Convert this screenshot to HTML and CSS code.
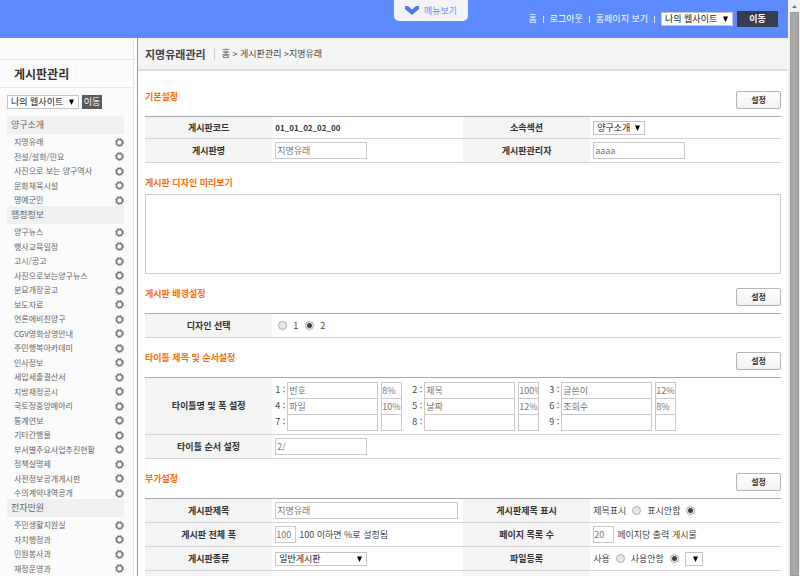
FILE: index.html
```html
<!DOCTYPE html>
<html lang="ko">
  <head>
    <meta charset="UTF-8" />
    <meta name="viewport" content="width=device-width, initial-scale=1.0" />
    <title>게시판관리</title>
    <link rel="stylesheet" href="styles.css">
  </head>
  <body>
    <!-- 톱니바퀴 아이콘 -->
    <svg class="defs" width="0" height="0" aria-hidden="true">
      <symbol id="gear" viewBox="0 0 18 18">
        <circle cx="9" cy="9" r="6" fill="none" stroke="#777" stroke-width="2.8" />
        <circle cx="9" cy="9" r="7.9" fill="none" stroke="#777" stroke-width="2" stroke-dasharray="3.1 3.1" />
      </symbol>
    </svg>

    <div class="page">
      <header class="header">
        <button type="button" class="menu-tab">
          <svg width="14" height="9" viewBox="0 0 14 9" aria-hidden="true">
            <path d="M0 0 L3 0 L7 3.5 L11 0 L14 0 L14 3 L7 9 L0 3 Z" fill="#4a7cf0" />
          </svg>
          메뉴보기
        </button>
        <nav class="top-nav">
          <a href="#">홈</a><i></i>
          <a href="#">로그아웃</a><i></i>
          <a href="#">홈페이지 보기</a><i></i>
          <select class="site-select" aria-label="사이트 선택"><option>나의 웹사이트</option></select>
          <button type="button" class="go-btn">이동</button>
        </nav>
      </header>

      <div class="body">
        <aside class="sidebar">
          <div class="side-space"></div>
          <h2 class="side-title">게시판관리</h2>
          <div class="side-go">
            <select class="site-select" aria-label="사이트 선택"><option>나의 웹사이트</option></select>
            <button type="button">이동</button>
          </div>
          <div class="side-menu" id="sideMenu"></div>
        </aside>

        <main class="main">
          <div class="main-head">
            <h1>지명유래관리</h1>
            <p class="path">홈 &gt; 게시판관리 &gt;지명유래</p>
          </div>

          <form class="content">
            <!-- 기본설정 -->
            <section>
              <div class="section-head">
                <h3>기본설정</h3>
                <button type="button" class="set-btn">설정</button>
              </div>
              <table class="form-table">
                <colgroup><col class="col-th" /><col class="col-td" /><col class="col-th" /><col class="col-td" /></colgroup>
                <tr class="short">
                  <th>게시판코드</th>
                  <td><b class="code">01_01_02_02_00</b></td>
                  <th><label for="section">소속섹션</label></th>
                  <td><select id="section" class="w52"><option>양구소개</option></select></td>
                </tr>
                <tr>
                  <th><label for="boardName">게시판명</label></th>
                  <td><input type="text" id="boardName" class="mid" value="지명유래" /></td>
                  <th><label for="manager">게시판관리자</label></th>
                  <td><input type="text" id="manager" class="mid" value="aaaa" /></td>
                </tr>
              </table>
            </section>

            <!-- 디자인 미리보기 -->
            <section>
              <div class="section-head plain">
                <h3>게시판 디자인 미리보기</h3>
              </div>
              <div class="preview"></div>
            </section>

            <!-- 배경설정 -->
            <section>
              <div class="section-head">
                <h3>게시판 배경설정</h3>
                <button type="button" class="set-btn">설정</button>
              </div>
              <table class="form-table">
                <colgroup><col class="col-th" /><col /></colgroup>
                <tr>
                  <th>디자인 선택</th>
                  <td>
                    <div class="line design">
                      <label><input type="radio" name="design" /> 1</label>
                      <label><input type="radio" name="design" checked /> 2</label>
                    </div>
                  </td>
                </tr>
              </table>
            </section>

            <!-- 타이틀 설정 -->
            <section>
              <div class="section-head">
                <h3>타이틀 제목 및 순서설정</h3>
                <button type="button" class="set-btn">설정</button>
              </div>
              <table class="form-table">
                <colgroup><col class="col-th" /><col /></colgroup>
                <tr class="tall">
                  <th>타이틀명 및 폭 설정</th>
                  <td><div class="titles" id="titles"></div></td>
                </tr>
                <tr>
                  <th><label for="order">타이틀 순서 설정</label></th>
                  <td><input type="text" id="order" class="mid" value="2/" /></td>
                </tr>
              </table>
            </section>

            <!-- 부가설정 -->
            <section>
              <div class="section-head">
                <h3>부가설정</h3>
                <button type="button" class="set-btn">설정</button>
              </div>
              <table class="form-table">
                <colgroup><col class="col-th" /><col class="col-td" /><col class="col-th" /><col class="col-td" /></colgroup>
                <tr>
                  <th><label for="boardTitle">게시판제목</label></th>
                  <td><input type="text" id="boardTitle" class="wide" value="지명유래" /></td>
                  <th>게시판제목 표시</th>
                  <td>
                    <div class="line">
                      <label>제목표시 <input type="radio" name="showTitle" /></label>
                      <label>표시안함 <input type="radio" name="showTitle" checked /></label>
                    </div>
                  </td>
                </tr>
                <tr>
                  <th><label for="boardWidth">게시판 전체 폭</label></th>
                  <td>
                    <div class="line tight"><input type="text" id="boardWidth" class="small" value="100" /> 100 이하면 %로 설정됨</div>
                  </td>
                  <th><label for="listCount">페이지 목록 수</label></th>
                  <td>
                    <div class="line tight"><input type="text" id="listCount" class="small" value="20" /> 페이지당 출력 게시물</div>
                  </td>
                </tr>
                <tr>
                  <th><label for="boardType">게시판종류</label></th>
                  <td><select id="boardType" class="mid"><option>일반게시판</option></select></td>
                  <th>파일등록</th>
                  <td>
                    <div class="line">
                      <label>사용 <input type="radio" name="file" /></label>
                      <label>사용안함 <input type="radio" name="file" checked /></label>
                      <select class="w18" aria-label="파일 수"><option></option></select>
                    </div>
                  </td>
                </tr>
                <tr>
                  <th></th>
                  <td></td>
                  <th></th>
                  <td></td>
                </tr>
              </table>
            </section>
          </form>
        </main>
      </div>
    </div>

    <div class="scrollbar" aria-hidden="true">
      <svg width="9" height="12" viewBox="0 0 9 12"><path d="M2 8 L4.5 5 L7 8 Z" fill="#777" /></svg>
      <div class="thumb"></div>
    </div>

    <script>
      // 왼쪽 메뉴
      const menus = [
        ["양구소개", ["지명유래", "전설/설화/민요", "사진으로 보는 양구역사", "문화체육시설", "명예군민"]],
        ["행정정보", [
          "양구뉴스", "행사교육일정", "고시/공고", "사진으로보는양구뉴스", "분묘개장공고",
          "보도자료", "언론에비친양구", "CGV영화상영안내", "주민행복아카데미", "인사정보",
          "세입세출결산서", "지방재정공시", "국토정중앙메아리", "통계연보", "기타간행물",
          "부서별주요사업추진현황", "정책실명제", "사전정보공개게시판", "수의계약내역공개",
        ]],
        ["전자민원", ["주민생활지원실", "자치행정과", "민원봉사과", "재정운영과"]],
      ];

      document.getElementById("sideMenu").innerHTML = menus
        .map(([title, items]) => `
          <h3>${title}</h3>
          <ul>${items
            .map((name) => `<li><a href="#">${name}</a><a href="#" aria-label="${name} 설정"><svg width="9" height="9"><use href="#gear" /></svg></a></li>`)
            .join("")}</ul>`)
        .join("");

      // 타이틀명과 폭
      const titles = [
        ["번호", "8%"], ["제목", "100%"], ["글쓴이", "12%"],
        ["파일", "10%"], ["날짜", "12%"], ["조회수", "8%"],
        ["", ""], ["", ""], ["", ""],
      ];

      document.getElementById("titles").innerHTML = titles
        .map(([name, width], i) => `
          <div class="title-item">
            <label for="title${i + 1}">${i + 1} :</label>
            <input type="text" id="title${i + 1}" class="name" value="${name}" />
            <input type="text" class="small" aria-label="${i + 1} 폭" value="${width}" />
          </div>`)
        .join("");
    </script>
  </body>
</html>
```
FILE: styles.css
```css
* {
  box-sizing: border-box;
  margin: 0;
  padding: 0;
}

body {
  display: flex;
  height: 100vh;
  overflow: hidden;
  font-family: "Noto Sans CJK KR", sans-serif;
  font-size: 9px;
  line-height: 12px;
  color: #444;
  background-color: #fff;
}

a {
  color: inherit;
  text-decoration: none;
}

ul {
  list-style: none;
}

input,
select,
button {
  font-family: inherit;
  font-size: 9px;
  line-height: 12px;
}

button {
  border: none;
  cursor: pointer;
}

.defs {
  position: absolute;
}

.page {
  flex: 1;
  min-width: 0;
  display: flex;
  flex-direction: column;
}

/* 상단 */
.header {
  flex: none;
  display: flex;
  align-items: flex-start;
  height: 38px;
  background-color: #5c8bff;
}

.menu-tab {
  display: flex;
  align-items: center;
  gap: 5px;
  height: 21px;
  margin-left: 50%;
  padding: 0 11px;
  border-radius: 0 0 5px 5px;
  background-color: #f4f4f6;
  color: #5c8bff;
}

.top-nav {
  display: flex;
  align-items: center;
  gap: 6px;
  height: 38px;
  margin: 0 10px 0 auto;
  color: #fff;
}

.top-nav i {
  width: 1px;
  height: 7px;
  background-color: #dfe8ff;
}

.go-btn {
  width: 41px;
  height: 16px;
  margin-left: -2px;
  background-color: #363d4d;
  color: #fff;
  font-weight: bold;
}

/* 공통 입력 요소 */
select {
  appearance: none;
  height: 14px;
  padding: 0 0 0 3px;
  border: 1px solid #c4c4c4;
  border-radius: 0;
  color: #222;
  background: #fff url("data:image/svg+xml,%3Csvg xmlns='http://www.w3.org/2000/svg' width='5' height='6'%3E%3Cpath d='M0 0.5h5L2.5 6z'/%3E%3C/svg%3E") no-repeat right 4px center;
  line-height: 12px;
}

.site-select {
  width: 72px;
}

input[type="text"] {
  height: 17px;
  padding: 0 1px;
  border: 1px solid #c8c8c8;
  color: #777;
  background-color: #fff;
}

input[type="radio"] {
  appearance: none;
  width: 9px;
  height: 9px;
  border: 1px solid #aaa;
  border-radius: 50%;
  background-color: #e8e8e8;
}

input[type="radio"]:checked {
  background-image: radial-gradient(circle, #444 0 2px, transparent 3px);
}

input.small {
  width: 21px;
  padding: 0;
}

.name {
  width: 91px;
}

.mid {
  width: 92px;
}

.wide {
  width: 183px;
}

.w52 {
  width: 52px;
}

.w18 {
  width: 18px;
}

/* 본문 영역 */
.body {
  flex: 1;
  min-height: 0;
  display: flex;
}

.sidebar {
  flex: none;
  width: 134px;
  overflow: hidden;
  border-right: 1px solid #e6e6e6;
  background-color: #fbfbfb;
}

.side-space {
  height: 22px;
  border-bottom: 1px solid #e8e8e8;
}

.side-title {
  height: 28px;
  padding-left: 14px;
  border-bottom: 1px solid #e8e8e8;
  font-size: 12px;
  line-height: 28px;
  color: #333;
}

.side-go {
  display: flex;
  align-items: center;
  gap: 3px;
  height: 28px;
  padding-left: 7px;
}

.side-go button {
  width: 20px;
  height: 14px;
  background-color: #5a5a5a;
  color: #fff;
}

.side-menu {
  padding: 0 9px 0 7px;
}

.side-menu h3 {
  height: 18px;
  padding-left: 4px;
  background-color: #f0f0f0;
  font-size: 9px;
  font-weight: normal;
  line-height: 18px;
  color: #666;
}

.side-menu li {
  display: flex;
  justify-content: space-between;
  align-items: center;
  height: 14px;
  padding: 2px 0 0 7px;
  font-size: 8px;
  color: #666;
}

.side-menu li:nth-child(even) {
  height: 15px;
}

.side-menu svg {
  display: block;
}

.main {
  flex: 1;
  min-width: 0;
  margin-left: 3px;
  overflow: hidden;
  border-left: 1px solid #999;
}

.main-head {
  display: flex;
  align-items: center;
  height: 33px;
  padding-left: 7px;
  border-bottom: 2px solid #ddd;
  background-color: #f4f4f4;
}

.main-head h1 {
  font-size: 11px;
  line-height: 12px;
  color: #444;
}

.path {
  margin-left: 8px;
  padding-left: 7px;
  border-left: 1px solid #ccc;
}

.content {
  padding: 20px 7px 0;
}

section {
  margin-bottom: 14px;
}

.section-head {
  display: flex;
  justify-content: space-between;
  align-items: flex-start;
  margin-bottom: 7px;
}

.section-head.plain {
  margin-bottom: 5px;
}

.section-head h3 {
  font-size: 9px;
  line-height: 12px;
  color: #ff6c0a;
}

.set-btn {
  width: 45px;
  height: 18px;
  border: 1px solid #b4b4b4;
  border-radius: 2px;
  background: linear-gradient(#fff, #f2f2f2);
  color: #333;
  font-size: 8px;
  font-weight: bold;
}

.preview {
  height: 80px;
  border: 1px solid #ccc;
}

.form-table {
  width: 100%;
  border-top: 1px solid #aaa;
  border-spacing: 0;
  table-layout: fixed;
}

.col-th {
  width: 20%;
}

.col-td {
  width: 30%;
}

.form-table tr {
  height: 24px;
}

.form-table tr.short {
  height: 22px;
}

.form-table tr.tall {
  height: 57px;
}

.form-table th,
.form-table td {
  border-bottom: 1px solid #d4d4d4;
  vertical-align: middle;
}

.form-table th {
  background-color: #f4f4f4;
  color: #333;
}

.form-table td {
  padding-left: 3px;
  text-align: left;
}

.form-table td > input,
.form-table td > select {
  display: block;
}

.code {
  font-size: 8px;
  color: #333;
}

.line,
.line label {
  display: flex;
  align-items: center;
  gap: 6px;
}

.line.tight {
  gap: 3px;
}

.line.design {
  gap: 7px;
  padding-left: 3px;
}

.titles {
  display: grid;
  grid-template-columns: repeat(3, 137px);
  grid-auto-rows: 16px;
}

.title-item {
  display: flex;
  align-items: flex-start;
}

.title-item label {
  width: 12px;
  line-height: 15px;
  white-space: nowrap;
}

.title-item .small {
  margin-left: 3px;
}

/* 스크롤바 */
.scrollbar {
  flex: none;
  display: flex;
  flex-direction: column;
  width: 12px;
  padding: 0 1px 0 2px;
  background-color: #f1f1f1;
}

.scrollbar svg {
  flex: none;
  display: block;
}

.thumb {
  flex: 1;
  border: 1px solid #999;
  background-color: #a9a9a9;
}
```
